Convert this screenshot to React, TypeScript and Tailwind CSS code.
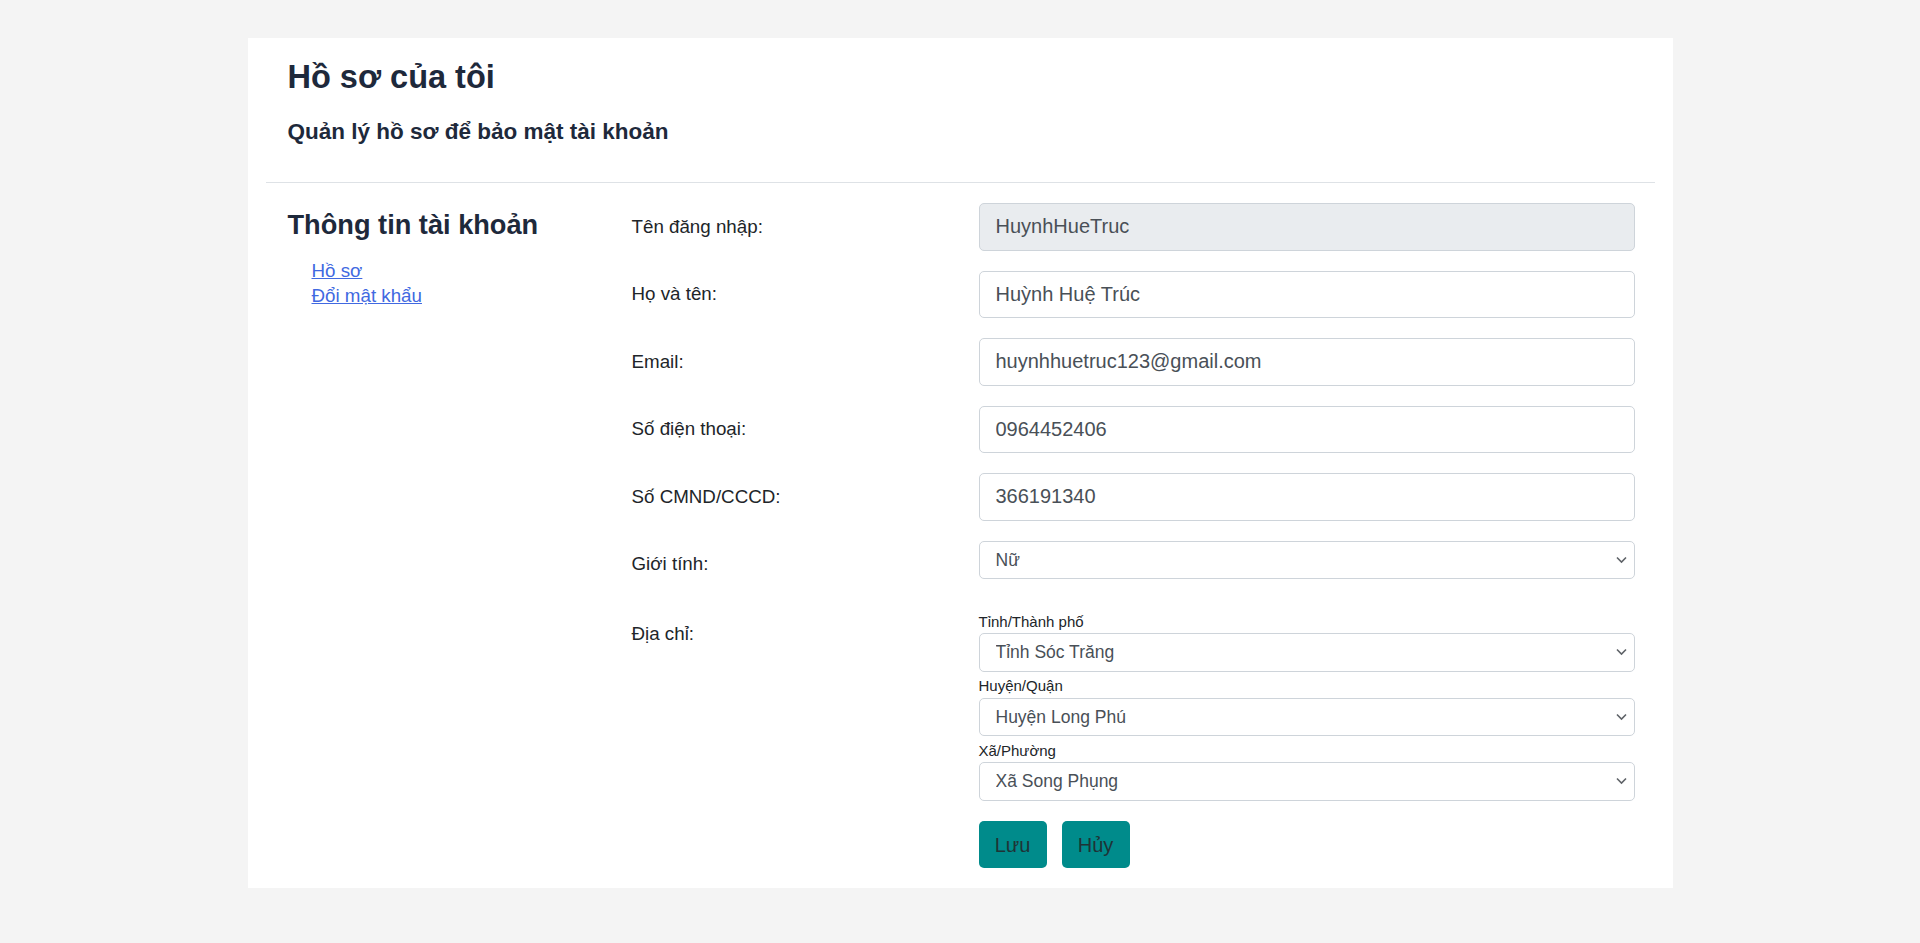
import React from "react";

const font = { fontFamily: '"Liberation Sans", Arial, sans-serif' };

function Chevron() {
  return (
    <svg
      className="pointer-events-none absolute right-[8px] top-1/2 -translate-y-1/2"
      width="11"
      height="7"
      viewBox="0 0 11 7"
      fill="none"
    >
      <path d="M1 1l4.5 4.5L10 1" stroke="#5f6368" strokeWidth="1.6" />
    </svg>
  );
}

function Select({ value }: { value: string }) {
  return (
    <div className="relative w-[656px] h-[38.75px]">
      <select
        defaultValue={value}
        className="appearance-none w-full h-full rounded-[5px] border border-[#ced4da] bg-white pl-[16px] pr-[30px] text-[17.5px] text-[#495057] outline-none"
      >
        <option>{value}</option>
      </select>
      <Chevron />
    </div>
  );
}

function Row({ label, value, disabled }: { label: string; value: string; disabled?: boolean }) {
  return (
    <div className="flex items-start">
      <div className="w-[347px] h-[47.5px] flex items-center text-[18.75px] text-[#212529]">{label}</div>
      <input
        readOnly
        value={value}
        className={
          "w-[656px] h-[47.5px] rounded-[5px] border border-[#ced4da] pl-[16px] text-[20px] text-[#495057] outline-none " +
          (disabled ? "bg-[#e9ecef]" : "bg-white")
        }
      />
    </div>
  );
}

function SubSelect({ label, value }: { label: string; value: string }) {
  return (
    <div className="flex flex-col">
      <div className="text-[15px] leading-[22.5px] text-[#212529]">{label}</div>
      <Select value={value} />
    </div>
  );
}

export default function App() {
  return (
    <div className="min-h-screen bg-[#f4f4f4] pt-[38px]" style={font}>
      <div className="mx-auto w-[1425px] bg-white pb-[20px]">
        <div className="pl-[40px] pt-[20px]">
          <h1 className="text-[32.5px] leading-[38px] font-bold text-[#1e293b]">Hồ sơ của tôi</h1>
          <h2 className="mt-[22px] text-[22.5px] leading-[27px] font-bold text-[#1e293b]">
            Quản lý hồ sơ để bảo mật tài khoản
          </h2>
        </div>
        <div className="mx-[18px] mt-[37px] border-t border-[#dee2e6]" />
        <div className="flex pt-[20px]">
          <div className="w-[384px] pl-[40px] pt-[5px]">
            <h3 className="text-[27.2px] leading-[34px] font-bold text-[#1e293b]">Thông tin tài khoản</h3>
            <div className="mt-[16px] pl-[24px] flex flex-col text-[18.75px] leading-[25px]">
              <a href="#" className="text-[#4169e1] underline w-fit">Hồ sơ</a>
              <a href="#" className="text-[#4169e1] underline w-fit">Đổi mật khẩu</a>
            </div>
          </div>
          <div className="flex flex-col gap-[20px]">
            <Row label="Tên đăng nhập:" value="HuynhHueTruc" disabled />
            <Row label="Họ và tên:" value="Huỳnh Huệ Trúc" />
            <Row label="Email:" value="huynhhuetruc123@gmail.com" />
            <Row label="Số điện thoại:" value="0964452406" />
            <Row label="Số CMND/CCCD:" value="366191340" />
            <div className="flex items-start">
              <div className="w-[347px] h-[47.5px] flex items-center text-[18.75px] text-[#212529]">Giới tính:</div>
              <Select value="Nữ" />
            </div>
            <div className="flex items-start mt-[2.5px]">
              <div className="w-[347px] h-[47.5px] flex items-center text-[18.75px] text-[#212529]">Địa chỉ:</div>
              <div className="flex flex-col gap-[3.25px]">
                <SubSelect label="Tỉnh/Thành phố" value="Tỉnh Sóc Trăng" />
                <SubSelect label="Huyện/Quận" value="Huyện Long Phú" />
                <SubSelect label="Xã/Phường" value="Xã Song Phụng" />
              </div>
            </div>
            <div className="flex">
              <div className="w-[347px]" />
              <div className="flex gap-[15px]">
                <button className="h-[47.5px] w-[68px] rounded-[5px] bg-[#008b8b] text-[20px] text-[#1f3336]">Lưu</button>
                <button className="h-[47.5px] w-[68px] rounded-[5px] bg-[#008b8b] text-[20px] text-[#1f3336]">Hủy</button>
              </div>
            </div>
          </div>
        </div>
      </div>
    </div>
  );
}
